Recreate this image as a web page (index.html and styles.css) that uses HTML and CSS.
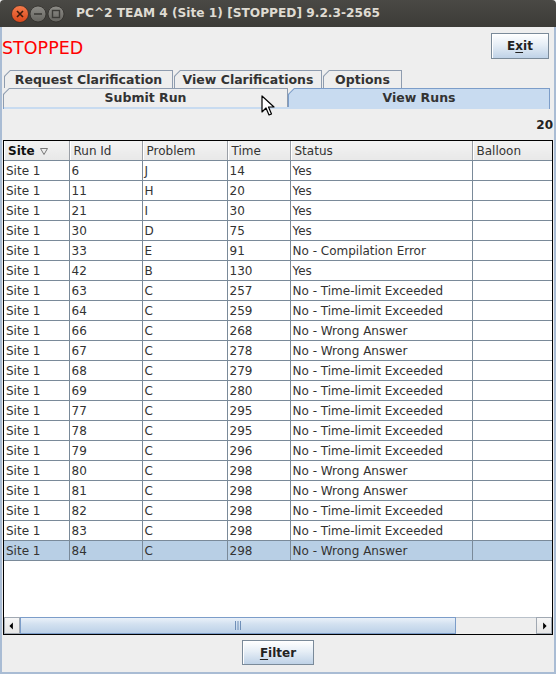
FILE: index.html
```html
<!DOCTYPE html>
<html>
<head>
<meta charset="utf-8">
<link rel="stylesheet" href="styles.css">
</head>
<body>
<div class="titlebar">
  <svg class="wbtns" width="70" height="27" viewBox="0 0 70 27">
    <defs>
      <linearGradient id="gc" x1="0" y1="0" x2="0" y2="1"><stop offset="0" stop-color="#f47c4c"/><stop offset="1" stop-color="#d9461a"/></linearGradient>
      <linearGradient id="gg" x1="0" y1="0" x2="0" y2="1"><stop offset="0" stop-color="#8e8d88"/><stop offset="1" stop-color="#65645f"/></linearGradient>
    </defs>
    <circle cx="20" cy="14" r="8.5" fill="url(#gc)" stroke="#2e2c28" stroke-width="0.8"/>
    <path d="M17 11 L23 17 M23 11 L17 17" stroke="#3b1a0c" stroke-width="1.6"/>
    <circle cx="38" cy="14" r="8" fill="url(#gg)" stroke="#2e2c28" stroke-width="0.8"/>
    <path d="M34 14 H42" stroke="#3c3b37" stroke-width="1.6"/>
    <circle cx="56" cy="14" r="8" fill="url(#gg)" stroke="#2e2c28" stroke-width="0.8"/>
    <rect x="52.5" y="10.5" width="7" height="7" fill="none" stroke="#3c3b37" stroke-width="1.4"/>
  </svg>
  <div class="title">PC^2 TEAM 4 (Site 1) [STOPPED] 9.2.3-2565</div>
</div>
<div class="frame">
  <div class="topbar">
    <div class="stopped">STOPPED</div>
    <button class="btn exit">E<u>x</u>it</button>
  </div>
  <div class="tabrow r1">
    <div class="tab t1"><span>Request Clarification</span></div>
    <div class="tab t2"><span>View Clarifications</span></div>
    <div class="tab t3"><span>Options</span></div>
  </div>
  <div class="tabrow r2">
    <div class="tab t4"><span>Submit Run</span></div>
    <div class="tab t5 sel"><span>View Runs</span></div>
  </div>
  <div class="band"></div>
  <div class="panel">
    <div class="count">20</div>
    <div class="tablebox">
      <table class="runs">
        <colgroup>
          <col class="c1"><col class="c2"><col class="c3"><col class="c4"><col class="c5"><col class="c6">
        </colgroup>
        <thead>
          <tr>
            <th class="sorted">Site <svg class="sort" width="8" height="7" viewBox="0 0 8 7"><path d="M0.5 0.5 H7.5 L4 6.5 Z" fill="none" stroke="#777" stroke-width="1"/></svg></th>
            <th>Run Id</th><th>Problem</th><th>Time</th><th>Status</th><th>Balloon</th>
          </tr>
        </thead>
        <tbody>
          <tr><td>Site 1</td><td>6</td><td>J</td><td>14</td><td>Yes</td><td></td></tr>
          <tr><td>Site 1</td><td>11</td><td>H</td><td>20</td><td>Yes</td><td></td></tr>
          <tr><td>Site 1</td><td>21</td><td>I</td><td>30</td><td>Yes</td><td></td></tr>
          <tr><td>Site 1</td><td>30</td><td>D</td><td>75</td><td>Yes</td><td></td></tr>
          <tr><td>Site 1</td><td>33</td><td>E</td><td>91</td><td>No - Compilation Error</td><td></td></tr>
          <tr><td>Site 1</td><td>42</td><td>B</td><td>130</td><td>Yes</td><td></td></tr>
          <tr><td>Site 1</td><td>63</td><td>C</td><td>257</td><td>No - Time-limit Exceeded</td><td></td></tr>
          <tr><td>Site 1</td><td>64</td><td>C</td><td>259</td><td>No - Time-limit Exceeded</td><td></td></tr>
          <tr><td>Site 1</td><td>66</td><td>C</td><td>268</td><td>No - Wrong Answer</td><td></td></tr>
          <tr><td>Site 1</td><td>67</td><td>C</td><td>278</td><td>No - Wrong Answer</td><td></td></tr>
          <tr><td>Site 1</td><td>68</td><td>C</td><td>279</td><td>No - Time-limit Exceeded</td><td></td></tr>
          <tr><td>Site 1</td><td>69</td><td>C</td><td>280</td><td>No - Time-limit Exceeded</td><td></td></tr>
          <tr><td>Site 1</td><td>77</td><td>C</td><td>295</td><td>No - Time-limit Exceeded</td><td></td></tr>
          <tr><td>Site 1</td><td>78</td><td>C</td><td>295</td><td>No - Time-limit Exceeded</td><td></td></tr>
          <tr><td>Site 1</td><td>79</td><td>C</td><td>296</td><td>No - Time-limit Exceeded</td><td></td></tr>
          <tr><td>Site 1</td><td>80</td><td>C</td><td>298</td><td>No - Wrong Answer</td><td></td></tr>
          <tr><td>Site 1</td><td>81</td><td>C</td><td>298</td><td>No - Wrong Answer</td><td></td></tr>
          <tr><td>Site 1</td><td>82</td><td>C</td><td>298</td><td>No - Time-limit Exceeded</td><td></td></tr>
          <tr><td>Site 1</td><td>83</td><td>C</td><td>298</td><td>No - Time-limit Exceeded</td><td></td></tr>
          <tr class="selrow"><td>Site 1</td><td>84</td><td>C</td><td>298</td><td>No - Wrong Answer</td><td></td></tr>
        </tbody>
      </table>
      <div class="fill"></div>
      <div class="hscroll">
        <div class="sbtn"><svg width="16" height="16" viewBox="0 0 16 16"><path d="M5 8 L9 4 V12 Z" fill="#000"/></svg></div>
        <div class="thumb"><svg width="8" height="9" viewBox="0 0 8 9"><path d="M1.5 0 V9 M4 0 V9 M6.5 0 V9" stroke="#6f8fb8" stroke-width="1"/></svg></div>
        <div class="track"></div>
        <div class="sbtn"><svg width="16" height="16" viewBox="0 0 16 16"><path d="M11 8 L7 4 V12 Z" fill="#000"/></svg></div>
      </div>
    </div>
    <div class="bottom">
      <button class="btn filter"><u>F</u>ilter</button>
    </div>
  </div>
</div>
<svg class="cursor" width="14" height="22" viewBox="0 0 14 22">
  <path d="M1 1 L1 17 L5 13 L8 20 L10.5 19 L7.5 12 L13 12 Z" fill="#fff" stroke="#000" stroke-width="1.2" stroke-linejoin="round"/>
</svg>
</body>
</html>
```
FILE: styles.css
```css
html, body {
  margin: 0;
  padding: 0;
}
body {
  width: 556px;
  height: 674px;
  overflow: hidden;
  position: relative;
  background: #eeeeee;
  font-family: "DejaVu Sans", sans-serif;
}
.titlebar {
  height: 27px;
  background: linear-gradient(#4a4945, #3c3b37);
  border-radius: 4px 4px 0 0;
  display: flex;
  align-items: center;
}
.wbtns {
  flex: none;
  display: block;
}
.title {
  margin-left: 6px;
  color: #dfdbd2;
  font-weight: bold;
  font-size: 12.2px;
  line-height: 27px;
  white-space: nowrap;
}
.frame {
  height: 647px;
  box-sizing: border-box;
  border: 2px solid #a9bcd4;
  border-top: none;
  background: #eeeeee;
  display: flex;
  flex-direction: column;
}
.topbar {
  height: 43px;
  display: flex;
  justify-content: space-between;
  align-items: flex-start;
  flex: none;
}
.stopped {
  margin-top: 11px;
  color: #ff0000;
  font-size: 17.5px;
  line-height: 20px;
}
.btn {
  font-family: "DejaVu Sans", sans-serif;
  font-weight: bold;
  font-size: 12px;
  color: #222;
  border: 1px solid #7a8a99;
  background: linear-gradient(#ffffff, #e6eef6 45%, #bfd2e7);
  box-shadow: inset 1px 1px 0 #fff;
  padding: 0;
  margin: 0;
}
.btn u {
  text-decoration-thickness: 1px;
  text-underline-offset: 2px;
}
.exit {
  margin-top: 6px;
  margin-right: 5px;
  width: 58px;
  height: 26px;
}
.tabrow {
  display: flex;
  gap: 1px;
  flex: none;
}
.r1 {
  height: 18px;
  margin-left: 2px;
}
.r2 {
  height: 19px;
  margin-left: 1px;
  gap: 0;
}
.tab {
  box-sizing: border-box;
  background: #8e9caf;
  clip-path: polygon(6px 0, 100% 0, 100% 100%, 0 100%, 0 6px);
  padding: 1px 1px 0 1px;
}
.tab span {
  display: flex;
  box-sizing: border-box;
  align-items: center;
  justify-content: center;
  height: 100%;
  background: #eeeeee;
  clip-path: polygon(5.4px 0, 100% 0, 100% 100%, 0 100%, 0 5.4px);
  font-weight: bold;
  font-size: 12.5px;
  color: #333;
  white-space: nowrap;
}
.r2 .tab span {
  padding-bottom: 2px;
}
.t1 { width: 169px; }
.t2 { width: 148px; }
.t3 { width: 79px; }
.t4 { width: 285px; }
.t5 { width: 262px; }
.tab.sel {
  background: #7c9dc9;
}
.tab.sel span {
  background: #c8dbf0;
}
.band {
  height: 2px;
  margin: 0 4px 0 1px;
  background: #c8dbf0;
  border-left: 1px solid #7c9dc9;
  border-right: 1px solid #7c9dc9;
  flex: none;
}
.panel {
  flex: 1;
  display: flex;
  flex-direction: column;
}
.count {
  margin-top: 9px;
  height: 15px;
  line-height: 15px;
  text-align: right;
  padding-right: 1px;
  font-weight: bold;
  font-size: 12px;
  color: #222;
}
.tablebox {
  margin: 7px 1px 0 1px;
  height: 495px;
  box-sizing: border-box;
  border: 1px solid #000;
  display: flex;
  flex-direction: column;
  background: #fff;
}
.runs {
  table-layout: fixed;
  border-collapse: collapse;
  width: 548px;
  font-size: 12px;
  color: #333;
}
.c1 { width: 65px; }
.c2 { width: 73px; }
.c3 { width: 85px; }
.c4 { width: 63px; }
.c5 { width: 182px; }
.c6 { width: 80px; }
.runs th {
  height: 17px;
  padding: 2px 0 0 4px;
  text-align: left;
  font-weight: normal;
  color: #333;
  background: linear-gradient(#f3f3f3, #e8e8e8);
  border-right: 1px solid #9a9fa6;
  border-bottom: 1px solid #7a8a99;
  box-shadow: inset 1px 0 0 #ffffff;
  line-height: 17px;
  white-space: nowrap;
}
.runs th.sorted {
  font-weight: bold;
  color: #111;
}
.sort {
  vertical-align: 0px;
  margin-left: 1px;
}
.runs td {
  height: 17px;
  padding: 2px 0 0 2px;
  line-height: 17px;
  border-right: 1px solid #7a8a99;
  border-bottom: 1px solid #7a8a99;
  white-space: nowrap;
  overflow: hidden;
}
.runs tr td:last-child,
.runs tr th:last-child {
  border-right: none;
}
.selrow td {
  background: #b8cfe5;
}
.fill {
  flex: 1;
  background: #fff;
}
.hscroll {
  height: 17px;
  display: flex;
  flex: none;
  background: #eeeeee;
}
.sbtn {
  width: 16px;
  height: 17px;
  box-sizing: border-box;
  border: 1px solid #a0a8b2;
  background: linear-gradient(#f6f6f6, #e6e6e6);
  display: flex;
  align-items: center;
  justify-content: center;
}
.sbtn svg {
  display: block;
}
.thumb {
  width: 436px;
  height: 17px;
  box-sizing: border-box;
  border: 1px solid #7c9dc9;
  background: linear-gradient(#eaf1f9, #d3e1f0 40%, #bcd1e8);
  display: flex;
  align-items: center;
  justify-content: center;
}
.thumb svg {
  display: block;
}
.track {
  flex: 1;
  border-top: 1px solid #b9c1ca;
  background: #eeeeee;
}
.bottom {
  display: flex;
  justify-content: center;
  margin-top: 5px;
}
.filter {
  width: 72px;
  height: 25px;
}
.cursor {
  position: absolute;
  left: 261px;
  top: 95px;
}
```
